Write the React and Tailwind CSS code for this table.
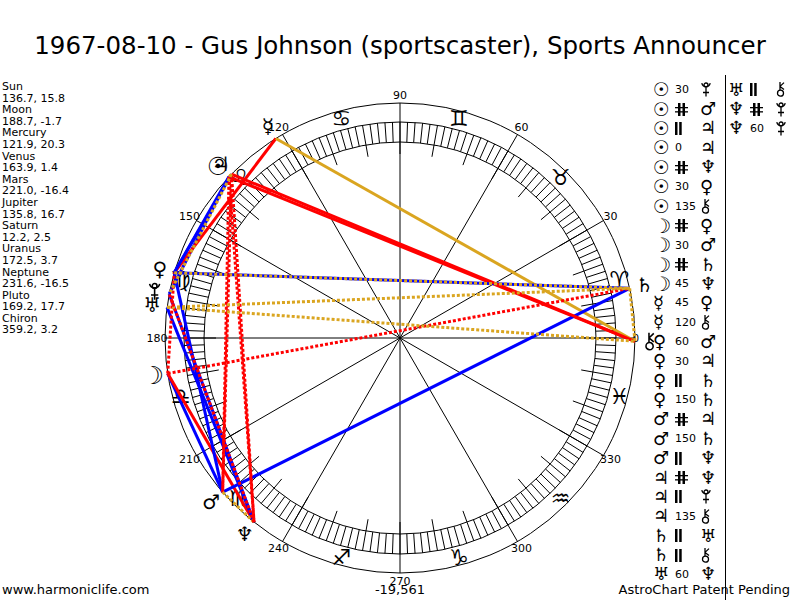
import React from "react";

// chart geometry (page coordinates)
const CX = 400;
const CY = 338;
const R_OUT = 235;
const R_BAND_OUT = 216;
const R_BAND_IN = 196;

const pt = (deg, r) => {
  const a = (deg * Math.PI) / 180;
  return [CX + r * Math.cos(a), CY - r * Math.sin(a)];
};

const planets = [
  { key: "sun", name: "Sun", lon: 136.7, dec: 15.8 },
  { key: "moon", name: "Moon", lon: 188.7, dec: -1.7 },
  { key: "mercury", name: "Mercury", lon: 121.9, dec: 20.3 },
  { key: "venus", name: "Venus", lon: 163.9, dec: 1.4 },
  { key: "mars", name: "Mars", lon: 221.0, dec: -16.4 },
  { key: "jupiter", name: "Jupiter", lon: 135.8, dec: 16.7 },
  { key: "saturn", name: "Saturn", lon: 12.2, dec: 2.5 },
  { key: "uranus", name: "Uranus", lon: 172.5, dec: 3.7 },
  { key: "neptune", name: "Neptune", lon: 231.6, dec: -16.5 },
  { key: "pluto", name: "Pluto", lon: 169.2, dec: 17.7 },
  { key: "chiron", name: "Chiron", lon: 359.2, dec: 3.2 },
];

const LON = Object.fromEntries(planets.map((p) => [p.key, p.lon]));

const GLYPH = {
  sun: "\u2609",
  moon: "\u263D",
  mercury: "\u263F",
  venus: "\u2640",
  mars: "\u2642",
  jupiter: "\u2643",
  saturn: "\u2644",
  uranus: "\u2645",
  neptune: "\u2646",
};

// table glyph classes (sun and moon are small in DejaVu, so bump them)
const TABLE_CLS = {
  sun: "text-[19px] font-bold leading-none",
  moon: "text-[20px] leading-none",
};
const CHART_CLS = {
  sun: "text-[25px] font-bold",
  moon: "text-[25px]",
};

const signs = ["♈", "♉", "♊", "♋", "♌", "♍", "♎", "♏", "♐", "♑", "♒", "♓"];

const aspectsLeft = [
  ["sun", "30", "pluto"],
  ["sun", "#", "mars"],
  ["sun", "||", "jupiter"],
  ["sun", "0", "jupiter"],
  ["sun", "#", "neptune"],
  ["sun", "30", "venus"],
  ["sun", "135", "chiron"],
  ["moon", "#", "venus"],
  ["moon", "30", "mars"],
  ["moon", "#", "saturn"],
  ["moon", "45", "neptune"],
  ["mercury", "45", "venus"],
  ["mercury", "120", "chiron"],
  ["venus", "60", "mars"],
  ["venus", "30", "jupiter"],
  ["venus", "||", "saturn"],
  ["venus", "150", "saturn"],
  ["mars", "#", "jupiter"],
  ["mars", "150", "saturn"],
  ["mars", "||", "neptune"],
  ["jupiter", "#", "neptune"],
  ["jupiter", "||", "pluto"],
  ["jupiter", "135", "chiron"],
  ["saturn", "||", "uranus"],
  ["saturn", "||", "chiron"],
  ["uranus", "60", "neptune"],
];

const aspectsRight = [
  ["uranus", "||", "chiron"],
  ["neptune", "#", "pluto"],
  ["neptune", "60", "pluto"],
];

const lineStyle = (a) => {
  if (a === "#") return { stroke: "#ff0000", dash: "3 2" };
  if (a === "||") return { stroke: "#daa520", dash: "3 2" };
  if (a === "45" || a === "135") return { stroke: "#ff0000" };
  if (a === "120") return { stroke: "#daa520" };
  return { stroke: "#0000ff" };
};

// pluto (orb over crescent over cross) and chiron drawn as small icons
const PlutoShape = () => (
  <g fill="none" stroke="currentColor" strokeWidth="1.3">
    <circle cx="6" cy="4" r="2" />
    <path d="M1.8 2.2 A4.3 4.3 0 0 0 10.2 2.2" />
    <path d="M6 6.6 V15.5 M3 11.5 H9" />
  </g>
);

const ChironShape = () => (
  <g fill="none" stroke="currentColor" strokeWidth="1.3">
    <circle cx="5.5" cy="12.2" r="3" />
    <path d="M5 1 V9.2 M5 5.4 L9 1.6 M5 5.4 L9 8.6" />
  </g>
);

const Glyph = ({ p }) => {
  if (p === "pluto" || p === "chiron") {
    return (
      <svg width="12" height="17" viewBox="0 0 12 17" className="text-black">
        {p === "pluto" ? <PlutoShape /> : <ChironShape />}
      </svg>
    );
  }
  return <span className={TABLE_CLS[p] || "text-[18px] leading-none"}>{GLYPH[p]}</span>;
};

const AspectMark = ({ a }) => {
  if (a === "||")
    return (
      <svg width="7" height="13" viewBox="0 0 7 13">
        <rect x="0" y="0" width="2.5" height="13" fill="black" />
        <rect x="4.2" y="0" width="2.5" height="13" fill="black" />
      </svg>
    );
  if (a === "#")
    return (
      <svg width="13" height="13" viewBox="0 0 13 13">
        <rect x="3" y="0" width="2.5" height="13" fill="black" />
        <rect x="7.5" y="0" width="2.5" height="13" fill="black" />
        <rect x="0" y="4" width="13" height="1.3" fill="black" />
        <rect x="0" y="8.2" width="13" height="1.3" fill="black" />
      </svg>
    );
  return <span className="text-[11px] leading-none">{a}</span>;
};

const AspectRow = ({ row }) => (
  <div className="grid h-[19.4px] grid-cols-[22px_25px_auto] items-center">
    <div className="flex items-center">
      <Glyph p={row[0]} />
    </div>
    <div className="flex items-center">
      <AspectMark a={row[1]} />
    </div>
    <div className="flex items-center">
      <Glyph p={row[2]} />
    </div>
  </div>
);

const Chart = () => {
  const hatch = [];
  for (let d = 0; d < 360; d += 2) {
    const [x1, y1] = pt(d, R_BAND_IN);
    const [x2, y2] = pt(d, R_BAND_OUT);
    hatch.push(<line key={"h" + d} x1={x1} y1={y1} x2={x2} y2={y2} />);
  }
  for (let d = 0; d < 360; d += 10) {
    const [x1, y1] = pt(d, 184);
    const [x2, y2] = pt(d, R_BAND_IN);
    hatch.push(<line key={"t" + d} x1={x1} y1={y1} x2={x2} y2={y2} />);
  }
  const spokes = [];
  for (let d = 0; d < 360; d += 30) {
    const [x, y] = pt(d, R_OUT);
    spokes.push(<line key={"s" + d} x1={CX} y1={CY} x2={x} y2={y} />);
  }
  const all = [...aspectsLeft, ...aspectsRight].filter((r) => r[1] !== "0");
  const solid = all.filter((r) => r[1] !== "#" && r[1] !== "||");
  const dotted = all.filter((r) => r[1] === "#" || r[1] === "||");
  const drawLine = (r, i) => {
    const [x1, y1] = pt(LON[r[0]], R_OUT);
    const [x2, y2] = pt(LON[r[2]], R_OUT);
    const s = lineStyle(r[1]);
    return (
      <line
        key={r.join("-") + i}
        x1={x1}
        y1={y1}
        x2={x2}
        y2={y2}
        stroke={s.stroke}
        strokeWidth="3"
        strokeDasharray={s.dash}
      />
    );
  };

  return (
    <svg
      width="510"
      height="507"
      viewBox="140 75 510 507"
      className="shrink-0 overflow-visible font-['DejaVu_Sans',sans-serif]"
    >
      <g stroke="black" strokeWidth="1" fill="none">
        <circle cx={CX} cy={CY} r={R_OUT} />
        <circle cx={CX} cy={CY} r={R_BAND_OUT} />
        <circle cx={CX} cy={CY} r={R_BAND_IN} />
        {hatch}
        {spokes}
      </g>

      {/* degree labels */}
      {[30, 60, 90, 120, 150, 180, 210, 240, 270, 300, 330].map((d) => {
        const [x, y] = pt(d, 243);
        return (
          <text
            key={"l" + d}
            x={x}
            y={y}
            textAnchor="middle"
            dominantBaseline="central"
            className="text-[11px]"
            fill="black"
          >
            {d}
          </text>
        );
      })}
      <text x="636" y="338" textAnchor="middle" dominantBaseline="central" className="text-[10px]" fill="black">
        0
      </text>

      {/* signs */}
      {signs.map((s, i) => {
        const [x, y] = pt(15 + i * 30, 227);
        return (
          <text
            key={"z" + i}
            x={x}
            y={y}
            textAnchor="middle"
            dominantBaseline="central"
            className="text-[22px]"
            fill="black"
          >
            {s + "\uFE0E"}
          </text>
        );
      })}

      {/* aspects */}
      {solid.map(drawLine)}
      {dotted.map(drawLine)}

      {/* planets */}
      {planets.map((p) => {
        const [x, y] = pt(p.lon, 250);
        if (p.key === "pluto" || p.key === "chiron") {
          return (
            <g key={p.key} transform={`translate(${x - 7} ${y - 10}) scale(1.2)`} className="text-black">
              {p.key === "pluto" ? <PlutoShape /> : <ChironShape />}
            </g>
          );
        }
        return (
          <text
            key={p.key}
            x={x}
            y={y}
            textAnchor="middle"
            dominantBaseline="central"
            className={CHART_CLS[p.key] || "text-[20px]"}
            fill="black"
          >
            {GLYPH[p.key]}
          </text>
        );
      })}
    </svg>
  );
};

const App = () => {
  return (
    <div className="h-[600px] w-[800px] overflow-hidden bg-white font-['DejaVu_Sans',sans-serif] text-black">
      {/* title */}
      <div className="h-[75px] pt-[31px] text-center text-[24.5px] leading-[30px]">
        1967-08-10 - Gus Johnson (sportscaster), Sports Announcer
      </div>

      <div className="flex h-[507px]">
        {/* planet positions */}
        <div className="w-[140px] shrink-0 pl-[2px] pt-[6px] text-[11px] leading-[11.6px]">
          {planets.map((p) => (
            <div key={p.key}>
              <div>{p.name}</div>
              <div>
                {p.lon.toFixed(1)}, {p.dec.toFixed(1)}
              </div>
            </div>
          ))}
        </div>

        <Chart />

        {/* aspect table */}
        <div className="flex h-[525px] flex-1">
          <div className="ml-[3px] w-[72px] pt-[5px]">
            {aspectsLeft.map((r, i) => (
              <AspectRow key={i} row={r} />
            ))}
          </div>
          <div className="border-l border-black pl-[2px] pt-[5px]">
            {aspectsRight.map((r, i) => (
              <AspectRow key={i} row={r} />
            ))}
          </div>
        </div>
      </div>

      {/* footer */}
      <div className="grid h-[18px] grid-cols-3 text-[13px] leading-[16px]">
        <div className="pl-[2px]">www.harmoniclife.com</div>
        <div className="text-center">-19,561</div>
        <div className="pr-[10px] text-right">AstroChart Patent Pending</div>
      </div>
    </div>
  );
};

export default App;
